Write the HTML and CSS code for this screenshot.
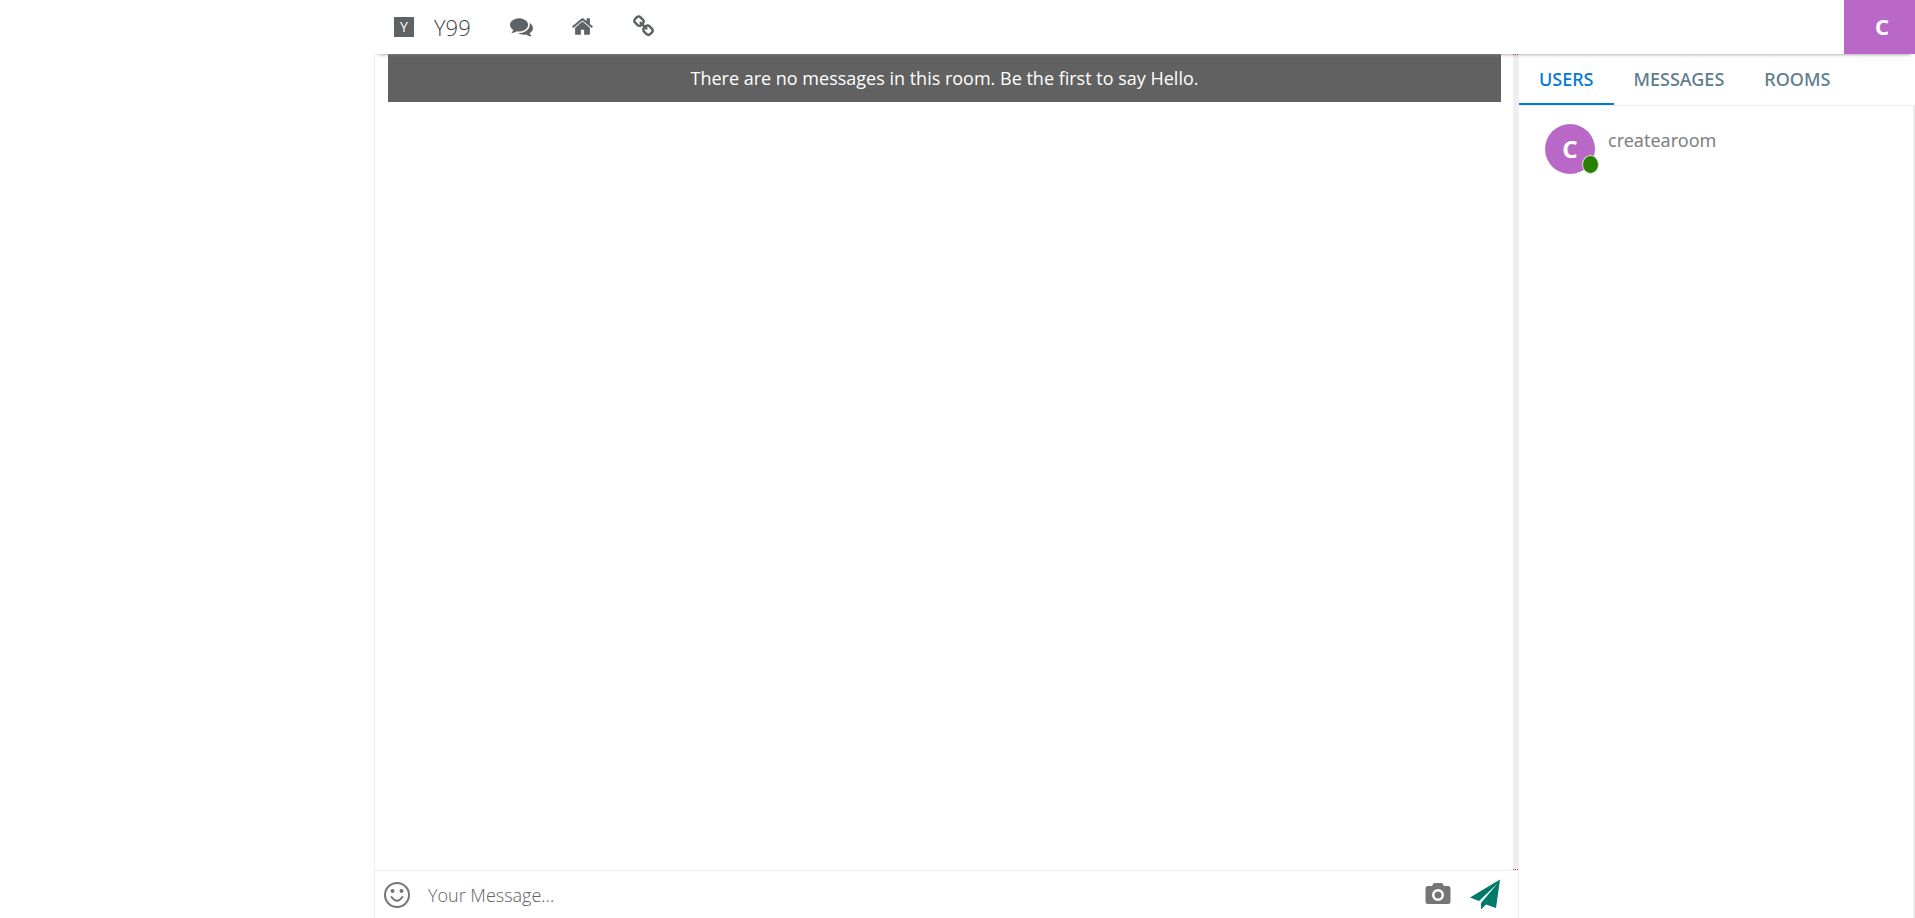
FILE: index.html
```html
<!DOCTYPE html>
<html lang="en">
<head>
<meta charset="utf-8">
<title>Y99</title>
<link rel="stylesheet" href="styles.css">
</head>
<body>
<div class="app">
  <header class="topbar">
    <nav class="topnav">
      <a class="brand" href="#"><span class="brand-mark">Y</span><span>Y99</span></a>
      <a class="nav-icon" href="#" aria-label="Chats"><svg viewBox="0 0 1792 1792"><path d="M1408 768q0 139-94 257t-256.5 186.5-353.5 68.5q-86 0-176-16-124 88-278 128-36 9-86 16h-3q-11 0-20.5-8t-11.5-21q-1-3-1-6.5t.5-6.5 2-6l2.5-5 3.5-5.5 4-5 4.5-5 4-4.5q5-6 23-25t26-29.5 22.5-29 25-38.5 20.5-44q-124-72-195-177t-71-224q0-139 94-257t256.5-186.5 353.5-68.5 353.5 68.5 256.5 186.5 94 257zm384 256q0 120-71 224.5t-195 176.5q10 24 20.5 44t25 38.5 22.5 29 26 29.5 23 25q1 1 4 4.5t4.5 5 4 5 3.5 5.5l2.5 5 2 6 .5 6.5-1 6.5q-3 14-13 22t-22 7q-50-7-86-16-154-40-278-128-90 16-176 16-271 0-472-132 58 4 88 4 161 0 309-45t264-129q125-92 192-212t67-254q0-77-23-152 129 71 204 178t75 230z"/></svg></a>
      <a class="nav-icon" href="#" aria-label="Home"><svg viewBox="0 0 1792 1792"><path d="M1472 992v480q0 26-19 45t-45 19h-384v-384h-256v384h-384q-26 0-45-19t-19-45v-480q0-1 .5-3t.5-3l575-474 575 474q1 2 1 6zm223-69l-62 74q-8 9-21 11h-3q-13 0-21-7l-692-577-692 577q-12 8-24 7-13-2-21-11l-62-74q-8-10-7-23.5t11-21.5l719-599q32-26 76-26t76 26l244 204v-195q0-14 9-23t23-9h192q14 0 23 9t9 23v408l219 182q10 8 11 21.5t-7 23.5z"/></svg></a>
      <a class="nav-icon" href="#" aria-label="Link"><svg viewBox="0 0 1792 1792"><path d="M1520 1216q0-40-28-68l-208-208q-28-28-68-28-42 0-72 32 3 3 19 18.5t21.5 21.5 15 19 13 25.5 3.5 27.5q0 40-28 68t-68 28q-15 0-27.5-3.5t-25.5-13-19-15-21.5-21.5-18.5-19q-33 31-33 73 0 40 28 68l206 207q27 27 68 27 40 0 68-26l147-146q28-28 28-67zm-703-705q0-40-28-68l-206-207q-28-28-68-28-39 0-68 27l-147 146q-28 28-28 67 0 40 28 68l208 208q27 27 68 27 42 0 72-31-3-3-19-18.5t-21.5-21.5-15-19-13-25.5-3.5-27.5q0-40 28-68t68-28q15 0 27.5 3.5t25.5 13 19 15 21.5 21.5 18.5 19q33-31 33-73zm895 705q0 120-85 203l-147 146q-83 83-203 83-121 0-204-85l-206-207q-83-83-83-203 0-123 88-209l-88-88q-86 88-208 88-120 0-204-84l-208-208q-84-84-84-204t85-203l147-146q83-83 203-83 121 0 204 85l206 207q83 83 83 203 0 123-88 209l88 88q86-88 208-88 120 0 204 84l208 208q84 84 84 204z"/></svg></a>
    </nav>
    <button class="account" type="button">C</button>
  </header>
  <main class="chat">
    <div class="messages">
      <p class="notice">There are no messages in this room. Be the first to say Hello.</p>
      <div class="rail"></div>
    </div>
    <form class="composer">
      <button class="tool" type="button" aria-label="Emoji"><svg viewBox="0 0 28 28"><circle cx="14" cy="14" r="12" fill="none" stroke="currentColor" stroke-width="2"/><circle cx="9.500" cy="10" r="2"/><circle cx="18.500" cy="10" r="2"/><path d="M8.500 16q5.500 7.500 11 0" fill="none" stroke="currentColor" stroke-width="2" stroke-linecap="round"/></svg></button>
      <input class="message" type="text" placeholder="Your Message..." aria-label="Your Message">
      <button class="tool" type="button" aria-label="Photo"><svg viewBox="0 0 28 28"><path fill-rule="evenodd" d="M4 5h4l1.500-2.500q.4-.5 1-.5h7q.6 0 1 .5l1.500 2.500h4q2.500 0 2.500 2.500v13q0 2.500-2.500 2.500h-20q-2.500 0-2.500-2.500v-13q0-2.500 2.500-2.500zM14 8a6 6 0 1 0 0 12a6 6 0 1 0 0-12zm0 2.500a3.500 3.500 0 1 1 0 7a3.500 3.500 0 1 1 0-7z"/></svg></button>
      <button class="tool send" type="submit" aria-label="Send"><svg viewBox="0 0 32 32"><path d="M31 0.500L1 18.500l9 3.500L28.500 4.500L12 24v6.500l5-5l10 3.500z"/></svg></button>
    </form>
  </main>
  <aside class="side">
    <div class="tabs" role="tablist">
      <button class="tab active" type="button" role="tab">USERS</button>
      <button class="tab" type="button" role="tab">MESSAGES</button>
      <button class="tab" type="button" role="tab">ROOMS</button>
    </div>
    <ul class="users">
      <li class="user"><span class="avatar">C<span class="online"></span></span><span>createaroom</span></li>
    </ul>
  </aside>
</div>
</body>
</html>
```
FILE: styles.css
```css
* { box-sizing: border-box; }
body { margin: 0; background: #fff; font-family: "Noto Sans", "Open Sans", sans-serif; font-size: 18px; color: #616161; }
button { border: 0; padding: 0; background: none; font: inherit; color: inherit; cursor: pointer; }
a { color: inherit; text-decoration: none; }
svg { display: block; fill: currentColor; }
.app { display: grid; grid-template: 54px 1fr / minmax(0, 1fr) 396px; height: 100vh; margin-left: 374px; }
.topbar { grid-column: 1 / 3; display: flex; justify-content: space-between; z-index: 1; background: #fff; box-shadow: 0 4px 4px -4px #888; }
.topnav { display: flex; align-items: center; gap: 38px; padding: 0 0 1px 20px; color: #5c6266; }
.brand { display: flex; align-items: center; gap: 20px; margin-right: 1px; font-family: "Open Sans", sans-serif; font-size: 22px; font-weight: 300; line-height: 28px; color: #3c4246; }
.brand-mark { width: 20px; height: 20px; background: #5c6266; color: #fff; font-size: 14px; line-height: 20px; font-weight: 400; text-align: center; }
.nav-icon svg { width: 23px; height: 23px; }
.account { width: 71px; padding: 0 0 2px 5px; background: #ba68c8; color: #fff; font-size: 22px; font-weight: 700; }
.chat { display: flex; flex-direction: column; border-left: 1px solid #eee; border-right: 1px solid #eee; }
.messages { flex: 1; display: flex; align-items: flex-start; gap: 12px; padding-left: 13px; }
.notice { flex: 1; margin: 0; padding: 12px; background: #616161; color: #fff; font-family: "Open Sans", sans-serif; font-size: 18px; line-height: 24px; text-align: center; }
.rail { width: 5px; align-self: stretch; background: #eee; border: 1px dotted #e91e63; border-width: 1px 0; }
.composer { display: flex; align-items: center; height: 48px; padding: 0 17px 0 8px; border-top: 1px solid #eee; gap: 17px; }
.tool { color: #757575; }
.tool svg { width: 28px; height: 28px; }
.send { color: #00796b; }
.send svg { width: 32px; height: 32px; }
.message { flex: 1; min-width: 0; border: 0; outline: 0; padding: 0; font-family: "Open Sans", sans-serif; font-size: 18px; font-weight: 300; }
.message::placeholder { color: #616161; opacity: 1; }
.side { display: flex; flex-direction: column; }
.tabs { display: flex; height: 52px; border-bottom: 1px solid #eee; color: #607d8b; font-weight: 500; }
.tab { padding: 0 20px; border-bottom: 2px solid transparent; }
.tab.active { color: #0078d7; border-color: #0078d7; }
.users { flex: 1; list-style: none; margin: 0; padding: 18px 26px; border-right: 2px solid #eee; }
.user { display: flex; gap: 13px; color: #808080; line-height: 32px; }
.avatar { position: relative; width: 50px; height: 50px; border-radius: 50%; background: #ba68c8; color: #fff; font-size: 24px; font-weight: 700; line-height: 50px; text-align: center; }
.online { position: absolute; right: -4px; bottom: 0; width: 17px; height: 19px; border: 1px solid #ddd; border-radius: 50%; background: #278000; }
```
